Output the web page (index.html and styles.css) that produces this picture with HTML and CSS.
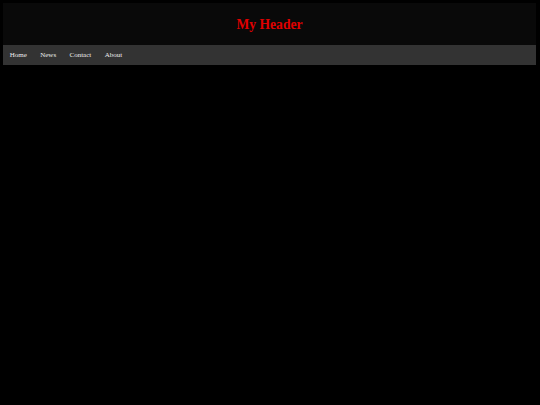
FILE: index.html
```html
<!DOCTYPE html>
<html>
<head>
<meta charset="utf-8">
<link rel="stylesheet" href="styles.css">
</head>
<body>
<header class="site-header">
  <h1 class="title">My Header</h1>
</header>
<nav class="topnav">
  <a href="#">Home</a>
  <a href="#">News</a>
  <a href="#">Contact</a>
  <a href="#">About</a>
</nav>
</body>
</html>
```
FILE: styles.css
```css
html, body {
  background: #000;
}
body {
  margin: 3px 4px 3px 3px;
  font-family: "Liberation Serif", "Times New Roman", serif;
}
.site-header {
  background: #090909;
  padding: 14px 0 12px;
  text-align: center;
}
.title {
  margin: 0;
  font-size: 13.6px;
  line-height: 16px;
  font-weight: bold;
  color: #e00000;
}
.topnav {
  background: #333;
  display: flex;
  height: 20px;
  align-items: center;
}
.topnav a {
  color: #eee;
  text-decoration: none;
  font-size: 7px;
  padding: 0 6.7px;
  line-height: 20px;
}
```
